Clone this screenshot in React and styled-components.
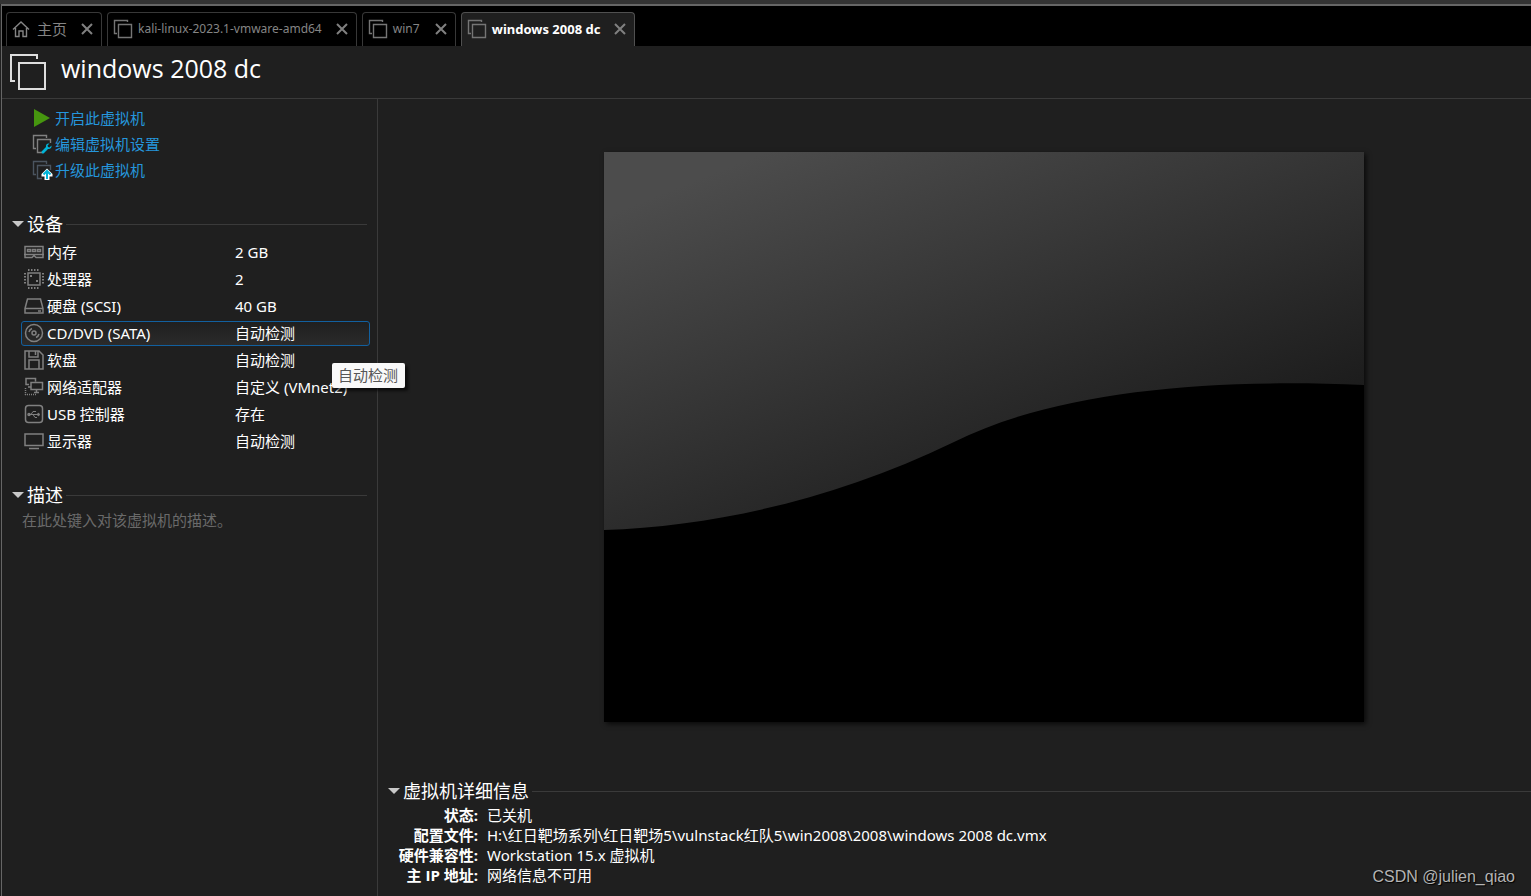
import React from "react";
import styled, { createGlobalStyle } from "styled-components";

const GlobalStyle = createGlobalStyle`
    * {
        box-sizing: border-box;
    }
    body {
        margin: 0;
        background: #1f1f1f;
        color: #ffffff;
        font-family: "Noto Sans", "Noto Sans CJK SC", sans-serif;
        font-size: 15px;
    }
    button {
        padding: 0;
        border: 0;
        background: none;
        color: inherit;
        font: inherit;
        text-align: left;
        cursor: pointer;
    }
`;

const Window = styled.div`
    display: flex;
    flex-direction: column;
    min-height: 100vh;
    border-top: 4px solid #333333;
`;
const Frame = styled.div`
    flex: 1;
    display: flex;
    flex-direction: column;
    margin-left: 1px;
    border-top: 2px solid #666666;
    border-left: 1px solid #666666;
`;

const TabBar = styled.nav`
    display: flex;
    gap: 5px;
    height: 40px;
    padding: 6px 4px 0;
    background: #000000;
`;
const Tab = styled.div`
    display: flex;
    align-items: center;
    min-width: 94px;
    border: 1px solid ${(props) => (props.$active ? "#505050" : "#383838")};
    border-bottom: 0;
    border-radius: 4px 4px 0 0;
    padding: 0 8px 2px 5px;
    background: ${(props) => (props.$active ? "#1f1f1f" : "#000000")};
    color: ${(props) => (props.$active ? "#ffffff" : "#858585")};
    font-size: ${(props) => (props.$home ? "15px" : "12px")};

    ${(props) => props.$active && "font-size: 13px; font-weight: 700;"}
`;
const TabButton = styled.button`
    display: flex;
    align-items: center;
    gap: ${(props) => (props.$home ? "7px" : "5px")};
    white-space: nowrap;
`;
const CloseButton = styled.button`
    display: flex;
    margin-left: auto;
    padding-left: 14px;
`;

const Header = styled.header`
    display: flex;
    align-items: center;
    gap: 15px;
    height: 53px;
    padding: 0 8px;
    border-bottom: 1px solid #3a3a3a;
`;
const Title = styled.h1`
    margin: 0;
    padding-bottom: 8px;
    font-family: "Open Sans", "Noto Sans CJK SC", sans-serif;
    font-size: 25px;
    font-weight: 400;
    line-height: 36px;
`;

const Body = styled.div`
    flex: 1;
    display: flex;
`;
const Sidebar = styled.aside`
    flex: none;
    width: 376px;
    padding: 6px 10px 0 10px;
    border-right: 1px solid #3a3a3a;
`;
const Actions = styled.div`
    padding-left: 21px;
`;
const Action = styled.a`
    display: flex;
    align-items: center;
    gap: 4px;
    height: 26px;
    color: #2596dc;
    line-height: 24px;
    text-decoration: none;
`;

const SectionHead = styled.button`
    display: flex;
    align-items: center;
    gap: 3px;
    width: 100%;
    height: 28px;
    font-size: 18px;
    line-height: 28px;
    white-space: nowrap;

    &::after {
        content: "";
        flex: 1;
        height: 1px;
        background: #3a3a3a;
    }
`;
const Section = styled.section`
    margin-top: 27px;
`;

const DeviceList = styled.ul`
    position: relative;
    display: flex;
    flex-direction: column;
    gap: 2px;
    margin: 0 -3px 0 9px;
    padding: 2px 0 0;
    list-style: none;
`;
const DeviceRow = styled.button`
    display: grid;
    grid-template-columns: 23px 188px 1fr;
    align-items: center;
    width: 100%;
    height: 25px;
    padding-left: 2px;
    border: 1px solid ${(props) => (props.$selected ? "#12609f" : "transparent")};
    border-radius: 3px;
    background: ${(props) =>
        props.$selected ? "linear-gradient(#1f1f1f, #2b2b2b)" : "none"};
    line-height: 23px;
    white-space: nowrap;

    svg {
        margin-bottom: 1px;
    }
`;
const Tooltip = styled.div`
    position: absolute;
    top: 125px;
    left: 311px;
    padding: 0 7px 0 6px;
    border-radius: 2px;
    background: #f9f9f9;
    box-shadow: 3px 3px 3px rgba(0, 0, 0, 0.6);
    color: #575757;
    line-height: 25px;
    white-space: nowrap;
`;
const Description = styled.textarea`
    display: block;
    width: 100%;
    height: 60px;
    padding: 0 10px;
    border: 0;
    outline: 0;
    background: none;
    color: #ffffff;
    font: inherit;
    line-height: 22px;
    resize: none;

    &::placeholder {
        color: #6a6a6a;
        opacity: 1;
    }
`;

const Main = styled.main`
    flex: 1;
    min-width: 0;
    display: flex;
    flex-direction: column;
    padding-left: 10px;
`;
const PreviewArea = styled.div`
    flex: 1;
    display: flex;
    align-items: center;
    justify-content: center;
    padding: 0 0 2px 49px;
`;
const Preview = styled.svg`
    width: 70%;
    max-width: 760px;
    background: #000000;
    box-shadow: 2px 2px 5px rgba(0, 0, 0, 0.7);
`;
const Details = styled.section`
    padding-bottom: 11px;
`;
const DetailTable = styled.table`
    border-collapse: collapse;
    line-height: 20px;

    th,
    td {
        height: 20px;
        padding: 0;
        white-space: nowrap;
    }
    th {
        width: 96px;
        padding-right: 6px;
        font-family: "Open Sans", "Noto Sans CJK SC", sans-serif;
        font-size: 15px;
        font-weight: 700;
        text-align: right;
    }
    td {
        padding-left: 3px;
    }
`;
const DetailsFooter = styled.div`
    display: flex;
    justify-content: space-between;
    align-items: flex-end;
    padding-right: 16px;
`;
const Watermark = styled.span`
    color: #b4b4b4;
    font-family: "Liberation Sans", sans-serif;
    font-size: 16px;
    line-height: 16px;
    text-shadow: 1px 1px 1px #000000;
`;

function VmIcon() {
    return (
        <svg width="20" height="20" fill="none" stroke="#757575" strokeWidth="1.4">
            <path d="M4 14.500H1.500v-13h13V3M5.500 5.500h13v13h-13z" />
        </svg>
    );
}

function TitleIcon() {
    return (
        <svg width="36" height="36" fill="none" stroke="#dedede" strokeWidth="2">
            <path d="M5 27H1V1h26v4M9 9h26v26H9z" />
        </svg>
    );
}

function HomeIcon() {
    return (
        <svg width="18" height="18" fill="none" stroke="#858585" strokeWidth="1.4">
            <path d="M1 9.500L9 2l8 7.500M3.500 8v8.500h3.500v-5.500h4v5.500h3.500V8" />
        </svg>
    );
}

function CloseIcon() {
    return (
        <svg width="12" height="12" stroke="#808080" strokeWidth="2">
            <path d="M1 1l10 10M11 1L1 11" />
        </svg>
    );
}

function ArrowIcon() {
    return (
        <svg width="12" height="6">
            <path d="M0 0h12L6 6z" fill="#c8c8c8" />
        </svg>
    );
}

function PlayIcon() {
    return (
        <svg width="18" height="18">
            <path d="M1 0l16 9-16 9z" fill="#46960f" />
        </svg>
    );
}

function SettingsIcon() {
    return (
        <svg width="18" height="18" fill="none" overflow="visible">
            <path
                d="M3 13.500H.5V.5h13V3M9 17.500H4.500v-13h13V8"
                stroke="#808080"
                strokeWidth="1.4"
            />
            <path
                d="M9 18.500l-.5-2 4.500-4.500c-.5-2 1-4 3.500-3.500l-2 2 .5 1.500 1.500.5 2-2c.5 2.500-1.500 4-3.500 3.500L10.500 18.500z"
                fill="#00b4d8"
            />
        </svg>
    );
}

function UpgradeIcon() {
    return (
        <svg width="18" height="18" fill="none" overflow="visible">
            <path
                d="M3 13.500H.5V.5h13V3M9 17.500H4.500v-13h13V9"
                stroke="#4b5560"
                strokeWidth="1.4"
            />
            <path d="M14 7.500l5.500 5.500v2.500h-3V19h-5v-3.500h-3V13z" fill="#ffffff" />
            <path d="M14 18v-7M10.500 13.500l3.500-3.500 3.500 3.500" stroke="#00b4d8" strokeWidth="2" />
        </svg>
    );
}

const deviceIcons = {
    memory: (
        <path d="M1 4.500h18v11h-7l-2-2-2 2H1zM0 12.500h20M3.500 7.500h3v2h-3zM8.500 7.500h3v2h-3zM13.500 7.500h3v2h-3z" />
    ),
    cpu: (
        <>
            <path d="M4 4h12v12H4z" />
            <path
                d="M4 1h12M4 19h12M1 4v12M19 4v12"
                strokeWidth="2"
                strokeDasharray="1.500 1.500"
            />
            <path d="M6 7h2M12 12h2" strokeWidth="2" />
        </>
    ),
    disk: <path d="M1 12.500L3.500 3h13l2.500 9.500V17H1zM1 12.500h18M14 15h3" />,
    cd: (
        <>
            <circle cx="10" cy="10" r="8.500" />
            <circle cx="10" cy="10" r="2" />
            <path d="M5 9a5 5 0 0 1 3-3.500M15 11a5 5 0 0 1-3 3.500" />
        </>
    ),
    floppy: (
        <path d="M1 1h14l4 4v14H1zM5 1v6h9V1M11.500 1v4M5 19v-9h10v9" />
    ),
    network: (
        <>
            <path d="M5 7.500H2v-6h9.500v3M4 10h3M7 5.500h11.500v7H7zM12.500 13v2M10 15.500h5" />
            <path d="M1.500 11v7M1 17.500h11" strokeDasharray="1 1" />
        </>
    ),
    usb: (
        <>
            <rect x="1.500" y="1.500" width="17" height="17" rx="3" />
            <path
                d="M5 10.500h10M7 10.500l2-3h3M9 10.500l2 3h2M14 9l2 1.500-2 1.500z"
                strokeWidth="1"
            />
            <circle cx="5" cy="10.500" r="1" />
        </>
    ),
    display: (
        <path d="M1 3h18v11.500H1zM5 17.500h10" />
    ),
};

function DeviceIcon({ name }) {
    return (
        <svg width="20" height="20" fill="none" stroke="#808080" strokeWidth="1.5">
            {deviceIcons[name]}
        </svg>
    );
}

const tabs = [
    { id: "home", label: "主页" },
    { id: "kali", label: "kali-linux-2023.1-vmware-amd64" },
    { id: "win7", label: "win7" },
    { id: "dc", label: "windows 2008 dc" },
];

const devices = [
    { icon: "memory", name: "内存", value: "2 GB" },
    { icon: "cpu", name: "处理器", value: "2" },
    { icon: "disk", name: "硬盘 (SCSI)", value: "40 GB" },
    { icon: "cd", name: "CD/DVD (SATA)", value: "自动检测" },
    { icon: "floppy", name: "软盘", value: "自动检测" },
    { icon: "network", name: "网络适配器", value: "自定义 (VMnet2)" },
    { icon: "usb", name: "USB 控制器", value: "存在" },
    { icon: "display", name: "显示器", value: "自动检测" },
];

const details = [
    ["状态:", "已关机"],
    ["配置文件:", "H:\\红日靶场系列\\红日靶场5\\vulnstack红队5\\win2008\\2008\\windows 2008 dc.vmx"],
    ["硬件兼容性:", "Workstation 15.x 虚拟机"],
    ["主 IP 地址:", "网络信息不可用"],
];

function App() {
    const [activeTab, setActiveTab] = React.useState("dc");
    const [selected, setSelected] = React.useState("cd");
    const [text, setText] = React.useState("");
    const [showDevices, setShowDevices] = React.useState(true);
    const [showDescription, setShowDescription] = React.useState(true);
    const [showDetails, setShowDetails] = React.useState(true);

    return (
        <Window>
            <GlobalStyle />
            <Frame>
                <TabBar>
                    {tabs.map((tab) => (
                        <Tab
                            key={tab.id}
                            $active={tab.id === activeTab}
                            $home={tab.id === "home"}
                        >
                            <TabButton
                                $home={tab.id === "home"}
                                onClick={() => setActiveTab(tab.id)}
                            >
                                {tab.id === "home" ? <HomeIcon /> : <VmIcon />}
                                {tab.label}
                            </TabButton>
                            <CloseButton aria-label={"关闭 " + tab.label}>
                                <CloseIcon />
                            </CloseButton>
                        </Tab>
                    ))}
                </TabBar>
                <Header>
                    <TitleIcon />
                    <Title>windows 2008 dc</Title>
                </Header>
                <Body>
                    <Sidebar>
                        <Actions>
                            <Action href="#start">
                                <PlayIcon />
                                开启此虚拟机
                            </Action>
                            <Action href="#settings">
                                <SettingsIcon />
                                编辑虚拟机设置
                            </Action>
                            <Action href="#upgrade">
                                <UpgradeIcon />
                                升级此虚拟机
                            </Action>
                        </Actions>

                        {/* 设备 */}
                        <Section>
                            <SectionHead onClick={() => setShowDevices(!showDevices)}>
                                <ArrowIcon />
                                设备
                            </SectionHead>
                            {showDevices && (
                                <DeviceList>
                                    {devices.map((device) => (
                                        <li key={device.icon}>
                                            <DeviceRow
                                                $selected={device.icon === selected}
                                                onClick={() => setSelected(device.icon)}
                                            >
                                                <DeviceIcon name={device.icon} />
                                                <span>{device.name}</span>
                                                <span>{device.value}</span>
                                            </DeviceRow>
                                        </li>
                                    ))}
                                    <Tooltip role="tooltip">自动检测</Tooltip>
                                </DeviceList>
                            )}
                        </Section>

                        {/* 描述 */}
                        <Section>
                            <SectionHead
                                onClick={() => setShowDescription(!showDescription)}
                            >
                                <ArrowIcon />
                                描述
                            </SectionHead>
                            {showDescription && (
                                <Description
                                    aria-label="描述"
                                    placeholder="在此处键入对该虚拟机的描述。"
                                    value={text}
                                    onChange={(e) => setText(e.target.value)}
                                />
                            )}
                        </Section>
                    </Sidebar>
                    <Main>
                        <PreviewArea>
                            <Preview viewBox="0 0 760 570">
                                <defs>
                                    <linearGradient
                                        id="screen"
                                        gradientUnits="userSpaceOnUse"
                                        x1="22"
                                        y1="56"
                                        x2="185"
                                        y2="465"
                                    >
                                        <stop offset="0" stopColor="#4c4c4c" />
                                        <stop offset="1" stopColor="#1c1c1c" />
                                    </linearGradient>
                                </defs>
                                <path
                                    d="M0 0h760v233C600 226 450 240 350 290C230 348 110 374 0 378z"
                                    fill="url(#screen)"
                                />
                            </Preview>
                        </PreviewArea>
                        <Details>
                            <SectionHead onClick={() => setShowDetails(!showDetails)}>
                                <ArrowIcon />
                                虚拟机详细信息
                            </SectionHead>
                            <DetailsFooter>
                                {showDetails && (
                                    <DetailTable>
                                        <tbody>
                                            {details.map(([label, value]) => (
                                                <tr key={label}>
                                                    <th scope="row">{label}</th>
                                                    <td>{value}</td>
                                                </tr>
                                            ))}
                                        </tbody>
                                    </DetailTable>
                                )}
                                <Watermark>CSDN @julien_qiao</Watermark>
                            </DetailsFooter>
                        </Details>
                    </Main>
                </Body>
            </Frame>
        </Window>
    );
}

export default App;
